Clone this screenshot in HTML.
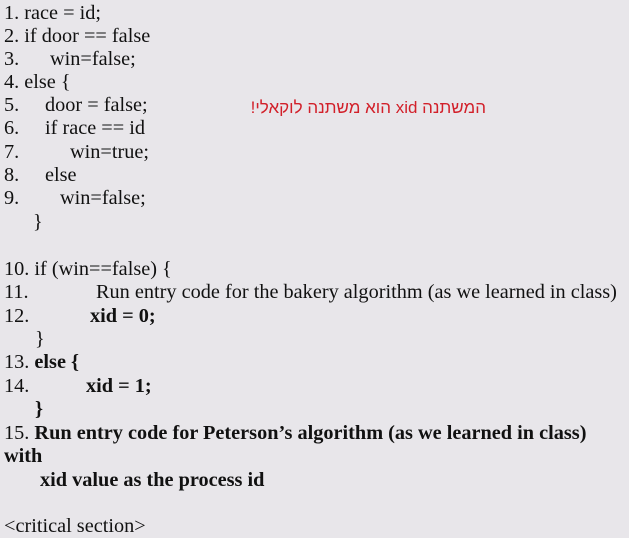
<!DOCTYPE html>
<html><head><meta charset="utf-8"><style>
html,body{margin:0;padding:0}
body{width:629px;height:537px;background:#e8e6ea;position:relative;overflow:hidden;font-family:"Liberation Serif",serif;font-size:20.3px;color:#111}
.l{position:absolute;line-height:24px;white-space:pre}
b{font-weight:bold}
.r{position:absolute;left:240px;top:98px;width:246px;text-align:right;font-family:"Liberation Sans",sans-serif;font-size:17px;color:#d2202a;direction:rtl;white-space:nowrap;line-height:20px}
</style></head><body>
<div class="l" style="left:4px;top:1px">1. race = id;</div>
<div class="l" style="left:4px;top:24px">2. if door == false</div>
<div class="l" style="left:4px;top:47px">3.<span style="position:absolute;left:46px">win=false;</span></div>
<div class="l" style="left:4px;top:70px">4. else {</div>
<div class="l" style="left:4px;top:93px">5.<span style="position:absolute;left:41px">door = false;</span></div>
<div class="l" style="left:4px;top:116px">6.<span style="position:absolute;left:41px">if race == id</span></div>
<div class="l" style="left:4px;top:140px">7.<span style="position:absolute;left:66px">win=true;</span></div>
<div class="l" style="left:4px;top:163px">8.<span style="position:absolute;left:41px">else</span></div>
<div class="l" style="left:4px;top:186px">9.<span style="position:absolute;left:56px">win=false;</span></div>
<div class="l" style="left:33px;top:210px">}</div>
<div class="l" style="left:4px;top:257px">10. if (win==false) {</div>
<div class="l" style="left:4px;top:280px">11.<span style="position:absolute;left:92px">Run entry code for the bakery algorithm (as we learned in class)</span></div>
<div class="l" style="left:4px;top:304px">12.<span style="position:absolute;left:86px"><b>xid = 0;</b></span></div>
<div class="l" style="left:35px;top:327px">}</div>
<div class="l" style="left:4px;top:350px">13. <b>else {</b></div>
<div class="l" style="left:4px;top:374px">14.<span style="position:absolute;left:82px"><b>xid = 1;</b></span></div>
<div class="l" style="left:35px;top:397px"><b>}</b></div>
<div class="l" style="left:4px;top:421px">15. <b>Run entry code for Peterson’s algorithm (as we learned in class)</b></div>
<div class="l" style="left:4px;top:444px"><b>with</b></div>
<div class="l" style="left:40px;top:468px"><b>xid value as the process id</b></div>
<div class="l" style="left:4px;top:514px">&lt;critical section&gt;</div>
<div class="r">המשתנה xid הוא משתנה לוקאלי!</div>
</body></html>
